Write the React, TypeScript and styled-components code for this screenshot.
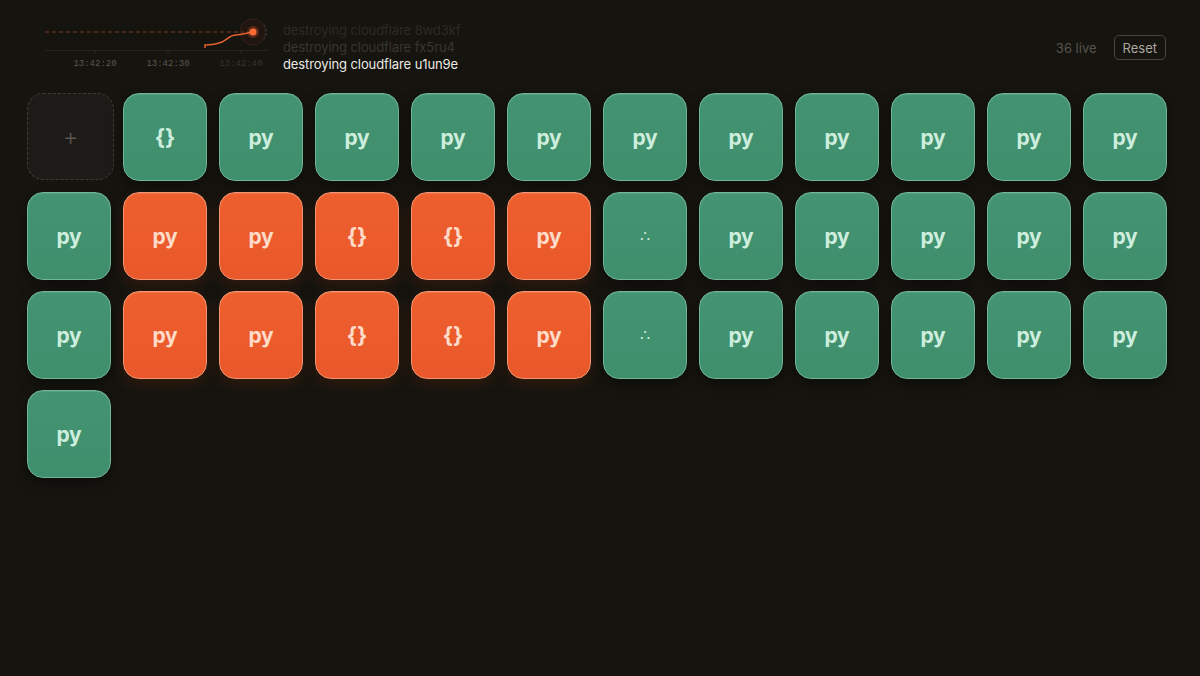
import styled, { createGlobalStyle } from 'styled-components';

const GlobalStyle = createGlobalStyle`
  body {
    margin: 0;
    background: #15140f;
    font-family: Inter, "Liberation Sans", sans-serif;
  }
`;

const Page = styled.div`
  width: 1200px;
  height: 676px;
  background: #15140f;
  overflow: hidden;
`;

const Header = styled.header`
  display: flex;
  align-items: flex-start;
  height: 81px;
  box-sizing: border-box;
  padding: 12px 34px 0 40px;
`;

const Log = styled.div`
  display: flex;
  flex-direction: column;
  margin: 10px 0 0 11px;
  font-size: 13px;
  line-height: 17px;
  letter-spacing: -0.1px;
`;

const LogLine = styled.div<{ $level: number }>`
  color: ${(p) => ['#2c2a24', '#38362f', '#ebe9e2'][p.$level]};
  white-space: nowrap;
`;

const Right = styled.div`
  display: flex;
  align-items: center;
  gap: 17px;
  margin: 23px 0 0 auto;
`;

const LiveCount = styled.span`
  font-size: 13px;
  color: #56544c;
`;

const ResetButton = styled.button`
  height: 25px;
  padding: 0 8px;
  background: transparent;
  border: 1px solid #47453e;
  border-radius: 5px;
  color: #a9a79e;
  font-family: Inter, "Liberation Sans", sans-serif;
  font-size: 13px;
  cursor: pointer;
`;

const Grid = styled.div`
  display: grid;
  grid-template-columns: repeat(12, 84px);
  grid-auto-rows: 88px;
  column-gap: 12px;
  row-gap: 11px;
  padding: 12px 0 0 27px;
`;

const AddTile = styled.button`
  width: 87px;
  height: 87px;
  box-sizing: border-box;
  border: 1px dashed #3d3b35;
  border-radius: 16px;
  background: #1c1b17;
  color: #57554e;
  font-size: 24px;
  font-weight: 300;
  font-family: Inter, "Liberation Sans", sans-serif;
  display: flex;
  align-items: center;
  justify-content: center;
  padding: 0;
`;

const Tile = styled.div<{ $hot?: boolean }>`
  box-sizing: border-box;
  border-radius: 16px;
  display: flex;
  align-items: center;
  justify-content: center;
  background: ${(p) => (p.$hot ? 'linear-gradient(#ee5f2e, #e9582a)' : 'linear-gradient(#449372, #3f8e6c)')};
  border: 1px solid ${(p) => (p.$hot ? '#f39570' : '#6fb794')};
  color: ${(p) => (p.$hot ? '#ffdcc8' : '#cdeedc')};
  box-shadow: ${(p) =>
    p.$hot
      ? '0 6px 14px rgba(110, 40, 10, 0.3), inset 0 1px 0 rgba(255,255,255,0.12)'
      : '0 6px 14px rgba(0, 0, 0, 0.35), inset 0 1px 0 rgba(255,255,255,0.1)'};
`;

const Glyph = styled.span<{ $kind: string }>`
  font-size: ${(p) => (p.$kind === 'py' ? '21px' : p.$kind === '{}' ? '22px' : '16px')};
  font-family: Inter, "Liberation Sans", sans-serif;
  font-weight: ${(p) => (p.$kind === '∴' ? 400 : 700)};
  letter-spacing: ${(p) => (p.$kind === '{}' ? '0px' : '-0.3px')};
  line-height: 1;
`;

type Cell = { kind: string; hot?: boolean };

const row1: Cell[] = [{ kind: '{}' }, ...Array.from({ length: 10 }, () => ({ kind: 'py' }))];
const busyRow: Cell[] = [
  { kind: 'py' },
  { kind: 'py', hot: true },
  { kind: 'py', hot: true },
  { kind: '{}', hot: true },
  { kind: '{}', hot: true },
  { kind: 'py', hot: true },
  { kind: '∴' },
  ...Array.from({ length: 5 }, () => ({ kind: 'py' })),
];
const cells: Cell[] = [...row1, ...busyRow, ...busyRow, { kind: 'py' }];

function Chart() {
  const ox = 40;
  const oy = 12;
  return (
    <svg width="232" height="62" viewBox={`${ox} ${oy} 232 62`}>
      <line x1="45" y1="32" x2="244" y2="32" stroke="#7a3a22" strokeWidth="1" strokeDasharray="4 3" />
      <line x1="45" y1="50.5" x2="268" y2="50.5" stroke="#25231d" strokeWidth="1" />
      {[95, 168, 241].map((x) => (
        <line key={x} x1={x} y1="50" x2={x} y2="54" stroke="#2c2a24" strokeWidth="1" />
      ))}
      <text x="95" y="66" textAnchor="middle" fontFamily='"Liberation Mono", monospace' fontSize="9" fill="#5a584f">
        13:42:20
      </text>
      <text x="168" y="66" textAnchor="middle" fontFamily='"Liberation Mono", monospace' fontSize="9" fill="#5a584f">
        13:42:30
      </text>
      <text x="241" y="66" textAnchor="middle" fontFamily='"Liberation Mono", monospace' fontSize="9" fill="#36342d">
        13:42:40
      </text>
      <circle cx="253" cy="32" r="13" fill="rgba(90,35,15,0.18)" stroke="#33201a" strokeWidth="1" />
      <path d="M 264 25 A 13 13 0 0 1 264 39" fill="none" stroke="#4a4740" strokeWidth="1.2" strokeDasharray="1.5 3" />
      <path
        d="M 205 48 L 205 45 C 212 45 217 44 222 42 C 228 39 230 35 236 35 C 242 35 246 33 253 32"
        fill="none"
        stroke="#e0622e"
        strokeWidth="1.5"
      />
      <circle cx="253" cy="32" r="6" fill="rgba(255,100,50,0.25)" />
      <circle cx="253" cy="32" r="3.5" fill="#ff6a35" />
    </svg>
  );
}

export default function App() {
  return (
    <Page>
      <GlobalStyle />
      <Header>
        <Chart />
        <Log>
          <LogLine $level={0}>destroying cloudflare 8wd3kf</LogLine>
          <LogLine $level={1}>destroying cloudflare fx5ru4</LogLine>
          <LogLine $level={2}>destroying cloudflare u1un9e</LogLine>
        </Log>
        <Right>
          <LiveCount>36 live</LiveCount>
          <ResetButton>Reset</ResetButton>
        </Right>
      </Header>
      <Grid>
        <AddTile>+</AddTile>
        {cells.map((c, i) => (
          <Tile key={i} $hot={c.hot}>
            <Glyph $kind={c.kind}>{c.kind}</Glyph>
          </Tile>
        ))}
      </Grid>
    </Page>
  );
}
